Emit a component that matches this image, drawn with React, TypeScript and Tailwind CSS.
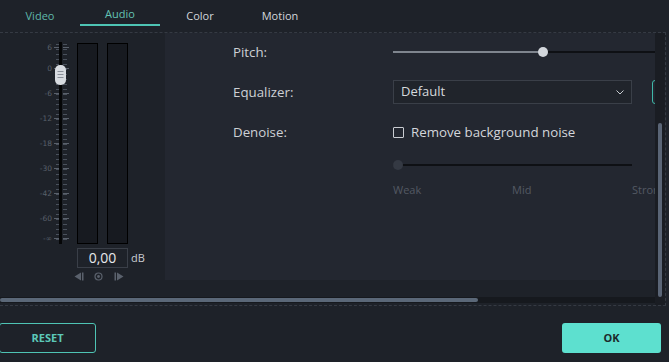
import React from "react";

const labels: [string, number][] = [
  ["6", 5],
  ["0", 26],
  ["-6", 51],
  ["-12", 76],
  ["-18", 101],
  ["-30", 126],
  ["-42", 151],
  ["-60", 176],
  ["-∞", 196],
];

function Scale() {
  const ticks: number[] = [];
  for (let y = 2; y <= 200; y += 5) ticks.push(y);
  return (
    <svg width="40" height="204" className="block">
      {ticks.map((y) => (
        <g key={y}>
          <line x1="26" x2="29" y1={y + 0.5} y2={y + 0.5} stroke="#4a515c" strokeWidth="1" />
          <line x1="33" x2="37" y1={y + 0.5} y2={y + 0.5} stroke="#4a515c" strokeWidth="1" />
        </g>
      ))}
      {labels.map(([t, y]) => (
        <g key={t}>
          <line x1="24" x2="29" y1={y + 0.5} y2={y + 0.5} stroke="#5a616c" strokeWidth="1" />
          <line x1="33" x2="39" y1={y + 0.5} y2={y + 0.5} stroke="#5a616c" strokeWidth="1" />
          <text x="22" y={y + 3} textAnchor="end" fontSize="7.5" fill="#59606b" fontFamily="'DejaVu Sans', sans-serif">
            {t}
          </text>
        </g>
      ))}
      <rect x="29" y="0" width="3" height="202" fill="#050607" />
      <rect x="25" y="23" width="11" height="20" rx="5" fill="#d7dbe0" />
      <line x1="27.5" x2="33.5" y1="29.5" y2="29.5" stroke="#8a9099" />
      <line x1="27.5" x2="33.5" y1="32.5" y2="32.5" stroke="#8a9099" />
      <line x1="27.5" x2="33.5" y1="35.5" y2="35.5" stroke="#8a9099" />
    </svg>
  );
}

export default function App() {
  const font = { fontFamily: "'Open Sans', 'Noto Sans', sans-serif" };
  return (
    <div className="w-[669px] h-[362px] bg-[#1e2229] overflow-hidden flex flex-col" style={font}>
      {/* Tabs */}
      <div className="h-[32px] flex shrink-0">
        <div className="w-[80px] h-[32px] flex justify-center pt-[8px] text-[11px] text-[#5fb8a9]">Video</div>
        <div className="w-[80px] h-[32px] flex flex-col items-center pt-[6px] text-[11px] text-[#63c3b4]">
          <span className="leading-[15px]">Audio</span>
          <div className="w-[80px] h-[2px] bg-[#4ec4b4] mt-[3px]" />
        </div>
        <div className="w-[80px] h-[32px] flex justify-center pt-[8px] text-[11px] text-[#d3d6db]">Color</div>
        <div className="w-[80px] h-[32px] flex justify-center pt-[8px] text-[11px] text-[#d3d6db]">Motion</div>
      </div>

      {/* Main */}
      <div className="w-[666px] h-[274px] border-t border-b border-r border-dashed border-[#353a43] flex shrink-0">
        <div className="w-[655px] flex flex-col">
          <div className="h-[264px] overflow-hidden">
            <div className="flex w-[720px] h-[264px] items-start">
              {/* Left meter panel */}
              <div className="w-[165px] shrink-0 flex flex-col pt-[9px]">
                <div className="flex pl-[30px]">
                  <Scale />
                  <div className="ml-[7px] mt-[1px] w-[21px] h-[201px] bg-[#171a20] border border-black" />
                  <div className="ml-[9px] mt-[1px] w-[21px] h-[201px] bg-[#171a20] border border-black" />
                </div>
                <div className="flex items-center mt-[2px] pl-[77px]">
                  <div className="w-[51px] h-[20px] border border-[#3a3f48] flex items-center justify-center text-[14px] text-[#e6e8eb] leading-none">
                    0,00
                  </div>
                  <span className="ml-[3px] text-[11px] text-[#c9ccd1]">dB</span>
                </div>
                <div className="flex items-center pl-[74px] mt-[2px] h-[12px]">
                  <svg width="10" height="9" viewBox="0 0 10 9">
                    <path d="M7 0.5 L0.5 4.5 L7 8.5 Z" fill="#5a616c" />
                    <rect x="8" y="0.5" width="1.5" height="8" fill="#5a616c" />
                  </svg>
                  <svg width="9" height="9" viewBox="0 0 9 9" className="ml-[10px]">
                    <circle cx="4.5" cy="4.5" r="3.5" fill="none" stroke="#5a616c" strokeWidth="1.2" />
                    <circle cx="4.5" cy="4.5" r="1.4" fill="#5a616c" />
                  </svg>
                  <svg width="10" height="9" viewBox="0 0 10 9" className="ml-[11px]">
                    <rect x="0.5" y="0.5" width="1.5" height="8" fill="#5a616c" />
                    <path d="M3 0.5 L9.5 4.5 L3 8.5 Z" fill="#5a616c" />
                  </svg>
                </div>
              </div>

              {/* Right settings panel */}
              <div className="w-[555px] h-[247px] bg-[#232730] shrink-0 pl-[68px] text-[13.3px]">
                {/* Pitch */}
                <div className="h-[40px] flex items-center -mt-[1px]">
                  <div className="w-[160px] mt-[2px] text-[#cdd0d5]">Pitch:</div>
                  <div className="relative w-[300px] h-[10px] flex items-center">
                    <div className="w-[150px] h-[2px] bg-[#7f858e]" />
                    <div className="flex-1 h-[2px] bg-[#0e1014]" />
                    <div className="absolute left-[145px] top-0 w-[10px] h-[10px] rounded-full bg-[#d3d7dc]" />
                  </div>
                </div>
                {/* Equalizer */}
                <div className="h-[40px] flex items-center">
                  <div className="w-[160px] mt-[2px] text-[#cdd0d5]">Equalizer:</div>
                  <div className="w-[239px] h-[24px] border border-[#3a3f48] bg-[#20242b] flex items-center justify-between pl-[7px] pr-[7px] text-[#d6d9dd] text-[13px]">
                    <span>Default</span>
                    <svg width="8" height="5" viewBox="0 0 8 5">
                      <path d="M0.5 0.5 L4 4 L7.5 0.5" fill="none" stroke="#c7cbd0" strokeWidth="1" />
                    </svg>
                  </div>
                  <div className="ml-[20px] w-[40px] h-[24px] border border-[#3fb8a8] rounded-[3px]" />
                </div>
                {/* Denoise */}
                <div className="h-[40px] flex items-center">
                  <div className="w-[160px] mt-[2px] text-[#cdd0d5]">Denoise:</div>
                  <div className="flex items-center mt-[1px]">
                    <div className="w-[11px] h-[11px] border border-[#c9ccd1] rounded-[1px]" />
                    <span className="ml-[7px] text-[#d3d6db]">Remove background noise</span>
                  </div>
                </div>
                <div className="pl-[160px] pt-[8px]">
                  <div className="relative w-[239px] h-[10px] flex items-center">
                    <div className="w-full h-[2px] bg-[#0e1014]" />
                    <div className="absolute left-0 top-0 w-[10px] h-[10px] rounded-full bg-[#343943]" />
                  </div>
                  <div className="relative w-[280px] h-[16px] mt-[12px] text-[11px] text-[#535963]">
                    <span className="absolute left-0 top-0">Weak</span>
                    <span className="absolute left-[119px] top-0">Mid</span>
                    <span className="absolute left-[239px] top-0">Strong</span>
                  </div>
                </div>
              </div>
            </div>
          </div>
          {/* Horizontal scrollbar */}
          <div className="h-[6px] bg-[#16191e] flex items-center w-[657px]">
            <div className="w-[478px] h-[4px] bg-[#5b6878] rounded-[2px]" />
          </div>
        </div>
        {/* Vertical scrollbar */}
        <div className="w-[10px] bg-[#1a1d23] flex justify-center pt-[90px] pb-[2px]">
          <div className="w-[4px] h-[174px] bg-[#5a6576] rounded-[2px]" />
        </div>
      </div>

      {/* Footer */}
      <div className="flex justify-between items-start pt-[17px] pr-[8px]">
        <div className="w-[97px] h-[30px] -ml-[1px] border border-[#4ec4b4] rounded-[3px] flex items-center justify-center text-[11px] font-bold text-[#5cc8b8]">
          RESET
        </div>
        <div className="w-[99px] h-[30px] bg-[#5de0cf] rounded-[3px] flex items-center justify-center text-[11px] font-bold text-[#1c2b2c]">
          OK
        </div>
      </div>
    </div>
  );
}
